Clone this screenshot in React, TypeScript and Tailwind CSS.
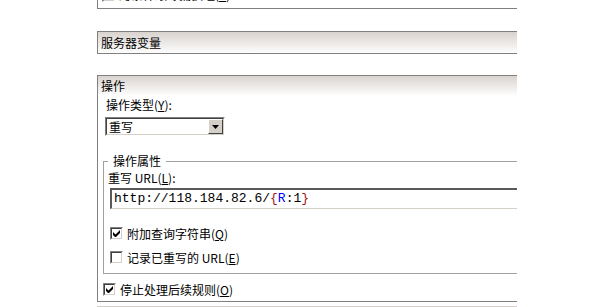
import React from "react";

const Check = ({ checked }: { checked?: boolean }) => (
  <span className="w-[13px] h-[13px] shrink-0 border border-t-[#808080] border-l-[#808080] border-b-white border-r-white">
    <span className="flex w-full h-full items-center justify-center bg-white border border-t-[#404040] border-l-[#404040] border-b-[#d4d0c8] border-r-[#d4d0c8]">
      {checked && (
        <svg width="7" height="7" viewBox="0 0 7 7">
          <path d="M0 2v3l2 2h1l4-4V0L2.5 4.5z" fill="#000" />
        </svg>
      )}
    </span>
  </span>
);

const App = () => {
  return (
    <div className="w-[600px] h-[307px] bg-white overflow-hidden text-[12px] text-black font-['Noto_Sans_CJK_SC',sans-serif]">
      <div className="ml-[97px] w-[420px] overflow-hidden">
        {/* previous section, scrolled off */}
        <div className="h-[9px] border-l border-b border-[#808080] overflow-hidden">
          <div className="-mt-[13px] h-[16px] flex items-center pl-[4px] gap-[4px] leading-[16px]">
            <Check />
            <span>
              跨条件跟踪捕获组(<u>T</u>)
            </span>
          </div>
        </div>

        <div className="mt-[22px] h-[23px] w-[500px] border-y border-l border-[#808080] bg-gradient-to-b from-[#d9d3cf] to-[#fdfdfd] flex items-center pl-[3px] leading-[16px]">
          服务器变量
        </div>

        <div className="mt-[21px] w-[500px] border-t border-l border-b border-[#808080]">
          <div className="h-[20px] bg-gradient-to-b from-[#d9d3cf] to-white flex items-center pl-[3px] leading-[16px]">
            操作
          </div>
          <div className="pl-[5px] pb-[5px]">
            <div className="ml-[3px] mt-[1px] h-[16px] leading-[16px]">
              操作类型(<u>Y</u>):
            </div>
            <div className="ml-[2px] mt-[4px] w-[120px] h-[19px] border border-t-[#808080] border-l-[#808080] border-b-white border-r-white">
              <div className="flex h-full bg-white border border-t-[#404040] border-l-[#404040] border-b-[#d4d0c8] border-r-[#d4d0c8]">
                <span className="flex-1 pl-[2px] leading-[15px]">重写</span>
                <span className="w-[15px] h-full flex items-center justify-center bg-[#d4d0c8] border border-t-white border-l-white border-b-[#404040] border-r-[#404040]">
                  <svg width="7" height="4" viewBox="0 0 7 4">
                    <path d="M0 0h7L3.5 4z" fill="#000" />
                  </svg>
                </span>
              </div>
            </div>

            <fieldset className="mt-[17px] w-[500px] border-t border-l border-b border-[#a0a0a0] pl-[4px] pb-[9px]">
              <legend className="px-[5px] h-[16px] leading-[16px]">操作属性</legend>
              <div className="mt-[1px] h-[16px] leading-[16px]">
                重写 URL(<u>L</u>):
              </div>
              <div className="ml-[2px] mt-[2px] h-[21px] flex items-center pl-[2px] bg-white border-t-2 border-l-2 border-b border-t-[#5a5a5a] border-l-[#5a5a5a] border-b-[#d4d0c8] font-['Liberation_Mono',monospace] text-[13px]">
                <span>
                  http://118.184.82.6/
                  <span className="text-[#a31515]">{"{"}</span>
                  <span className="text-[#0000ff]">R</span>:1
                  <span className="text-[#a31515]">{"}"}</span>
                </span>
              </div>
              <div className="ml-[2px] mt-[18px] h-[13px] flex items-center gap-[4px] leading-[13px]">
                <Check checked />
                <span>
                  附加查询字符串(<u>Q</u>)
                </span>
              </div>
              <div className="ml-[2px] mt-[11px] h-[13px] flex items-center gap-[4px] leading-[13px]">
                <Check />
                <span>
                  记录已重写的 URL(<u>E</u>)
                </span>
              </div>
            </fieldset>

            <div className="mt-[9px] h-[13px] flex items-center gap-[4px] leading-[13px]">
              <Check checked />
              <span>
                停止处理后续规则(<u>O</u>)
              </span>
            </div>
          </div>
        </div>
        <div className="mt-[4px] w-[500px] border-t border-[#d4d0c8]" />
      </div>
    </div>
  );
};

export default App;
